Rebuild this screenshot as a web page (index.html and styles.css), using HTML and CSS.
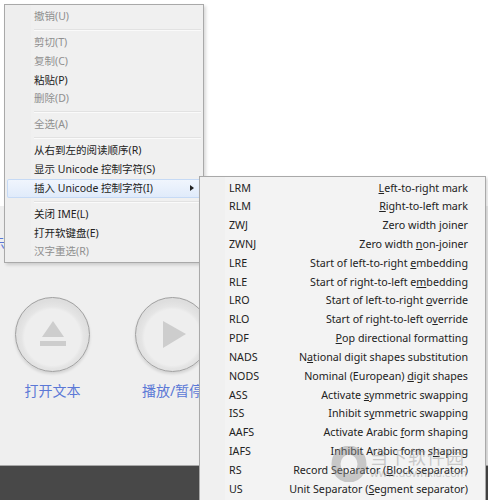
FILE: index.html
```html
<!DOCTYPE html>
<html lang="zh">
<head>
<meta charset="utf-8">
<title>Unicode 控制字符</title>
<link rel="stylesheet" href="styles.css">
</head>
<body>
<div class="page">
  <div class="top"></div>
  <div class="panel">
    <div class="hint">示</div>
    <div class="controls">
      <div class="control">
        <div class="disc">
          <svg class="glyph" viewBox="0 0 73 73"><polygon points="37,23 48,39 26,39"/><rect x="24" y="43" width="26" height="5"/></svg>
        </div>
        <span class="label">打开文本</span>
      </div>
      <div class="control">
        <div class="disc">
          <svg class="glyph" viewBox="0 0 73 73"><polygon points="27,23 50,36 27,50"/></svg>
        </div>
        <span class="label">播放/暂停</span>
      </div>
    </div>
  </div>
  <div class="footer"></div>
</div>

<div class="menu main-menu">
  <div class="item off">撤销(U)</div>
  <div class="sep"></div>
  <div class="item off">剪切(T)</div>
  <div class="item off">复制(C)</div>
  <div class="item">粘贴(P)</div>
  <div class="item off">删除(D)</div>
  <div class="sep"></div>
  <div class="item off">全选(A)</div>
  <div class="sep"></div>
  <div class="item">从右到左的阅读顺序(R)</div>
  <div class="item">显示 Unicode 控制字符(S)</div>
  <div class="item active">插入 Unicode 控制字符(I)<span class="arrow"></span></div>
  <div class="sep"></div>
  <div class="item">关闭 IME(L)</div>
  <div class="item">打开软键盘(E)</div>
  <div class="item off">汉字重选(R)</div>
</div>

<div class="menu sub-menu">
  <div class="row"><span>LRM</span><span><u>L</u>eft-to-right mark</span></div>
  <div class="row"><span>RLM</span><span><u>R</u>ight-to-left mark</span></div>
  <div class="row"><span>ZWJ</span><span>Zero width <u>j</u>oiner</span></div>
  <div class="row"><span>ZWNJ</span><span>Zero width <u>n</u>on-joiner</span></div>
  <div class="row"><span>LRE</span><span>Start of left-to-right <u>e</u>mbedding</span></div>
  <div class="row"><span>RLE</span><span>Start of right-to-left e<u>m</u>bedding</span></div>
  <div class="row"><span>LRO</span><span>Start of left-to-right <u>o</u>verride</span></div>
  <div class="row"><span>RLO</span><span>Start of right-to-left o<u>v</u>erride</span></div>
  <div class="row"><span>PDF</span><span><u>P</u>op directional formatting</span></div>
  <div class="row"><span>NADS</span><span>N<u>a</u>tional digit shapes substitution</span></div>
  <div class="row"><span>NODS</span><span>Nominal (European) <u>d</u>igit shapes</span></div>
  <div class="row"><span>ASS</span><span>Activate <u>s</u>ymmetric swapping</span></div>
  <div class="row"><span>ISS</span><span>Inhibit s<u>y</u>mmetric swapping</span></div>
  <div class="row"><span>AAFS</span><span>Activate Arabic <u>f</u>orm shaping</span></div>
  <div class="row"><span>IAFS</span><span>Inhibit Arabic form s<u>h</u>aping</span></div>
  <div class="row"><span>RS</span><span>Record Separator (<u>B</u>lock separator)</span></div>
  <div class="row"><span>US</span><span>Unit Separator (<u>S</u>egment separator)</span></div>
</div>

<div class="mark">
  <svg class="mark-logo" viewBox="0 0 38 36"><ellipse cx="19" cy="18" rx="13" ry="14" fill="none" stroke="#8c8c8c" stroke-width="9"/></svg>
  <div class="mark-text">
    <span class="mark-name">当下软件园</span>
    <span class="mark-url">www.downxia.com</span>
  </div>
</div>
</body>
</html>
```
FILE: styles.css
```css
html, body {
  margin: 0;
  padding: 0;
  width: 488px;
  height: 500px;
  overflow: hidden;
  background: #fff;
}
body {
  position: relative;
  font-family: "Noto Sans", "Noto Sans CJK SC", sans-serif;
  font-size: 10.7px;
  color: #222;
}
.page {
  display: flex;
  flex-direction: column;
  height: 500px;
}
.top { height: 206px; background: #fff; }
.panel {
  height: 260px;
  background: #efefef;
  padding-top: 29px;
  box-sizing: border-box;
  border-bottom: 1px solid #a8a8a8;
}
.hint {
  height: 62px;
  margin-left: -8px;
  font-size: 13px;
  line-height: 16px;
  color: #5b78d6;
}
.controls {
  display: flex;
  gap: 45px;
  padding-left: 15px;
}
.control {
  width: 75px;
  display: flex;
  flex-direction: column;
  align-items: center;
  gap: 10px;
}
.disc {
  width: 75px;
  height: 75px;
  flex: none;
  box-sizing: border-box;
  border: 1px solid #a0a0a0;
  border-radius: 50%;
  background: radial-gradient(circle at 50% 54%, #eeeeee 0 28px, #e5e5e5 31px, #dedede 37px);
  box-shadow: 0 2px 3px rgba(0,0,0,.12);
}
.glyph { display: block; width: 73px; height: 73px; }
.glyph polygon, .glyph rect { fill: #cdcdcd; }
.label {
  font-size: 14px;
  line-height: 18px;
  color: #5b78d6;
  white-space: nowrap;
}
.footer { flex: 1; background: #484848; }

.menu {
  position: absolute;
  box-sizing: border-box;
  background: #f0f0f0;
  border: 1px solid #a9a9a9;
  box-shadow: 2px 2px 3px rgba(0,0,0,.15);
}
.main-menu {
  left: 4px;
  top: 4px;
  width: 200px;
  height: 259px;
  padding: 2px;
  font-size: 10.5px;
  background: linear-gradient(90deg, #eeeeee 0 26px, #f0f0f0 26px);
}
.item {
  position: relative;
  height: 18.75px;
  line-height: 18.75px;
  padding-left: 27px;
  white-space: nowrap;
  box-sizing: border-box;
}
.off { color: #8f8f8f; }
.active {
  background: linear-gradient(#f1f6fd, #dfeafa);
  box-shadow: inset 0 0 0 1px #c6daf5;
  border-radius: 2px;
}
.arrow {
  position: absolute;
  right: 7px;
  top: 6px;
  border-left: 4px solid #222;
  border-top: 3.5px solid transparent;
  border-bottom: 3.5px solid transparent;
}
.sep {
  height: 1px;
  margin: 3px 0 2.25px 27px;
  background: #e2e2e2;
  border-bottom: 1px solid #fafafa;
}
.sub-menu {
  left: 199px;
  top: 176px;
  width: 287px;
  height: 340px;
  padding: 1.5px 17px 0 29px;
  background: linear-gradient(90deg, #f0f0f0 0 25px, #f3f3f3 25px);
}
.row {
  display: flex;
  justify-content: space-between;
  height: 18.83px;
  line-height: 18.83px;
  white-space: nowrap;
}
.mark {
  position: absolute;
  left: 330px;
  top: 446px;
  display: flex;
  gap: 2px;
  opacity: .42;
  pointer-events: none;
}
.mark-logo { width: 38px; height: 36px; }
.mark-text { display: flex; flex-direction: column; color: #8f8f8f; }
.mark-name { font-size: 18px; line-height: 21px; letter-spacing: 1px; font-family: "Noto Sans CJK SC", sans-serif; }
.mark-url { font-size: 11px; line-height: 12px; }
```
